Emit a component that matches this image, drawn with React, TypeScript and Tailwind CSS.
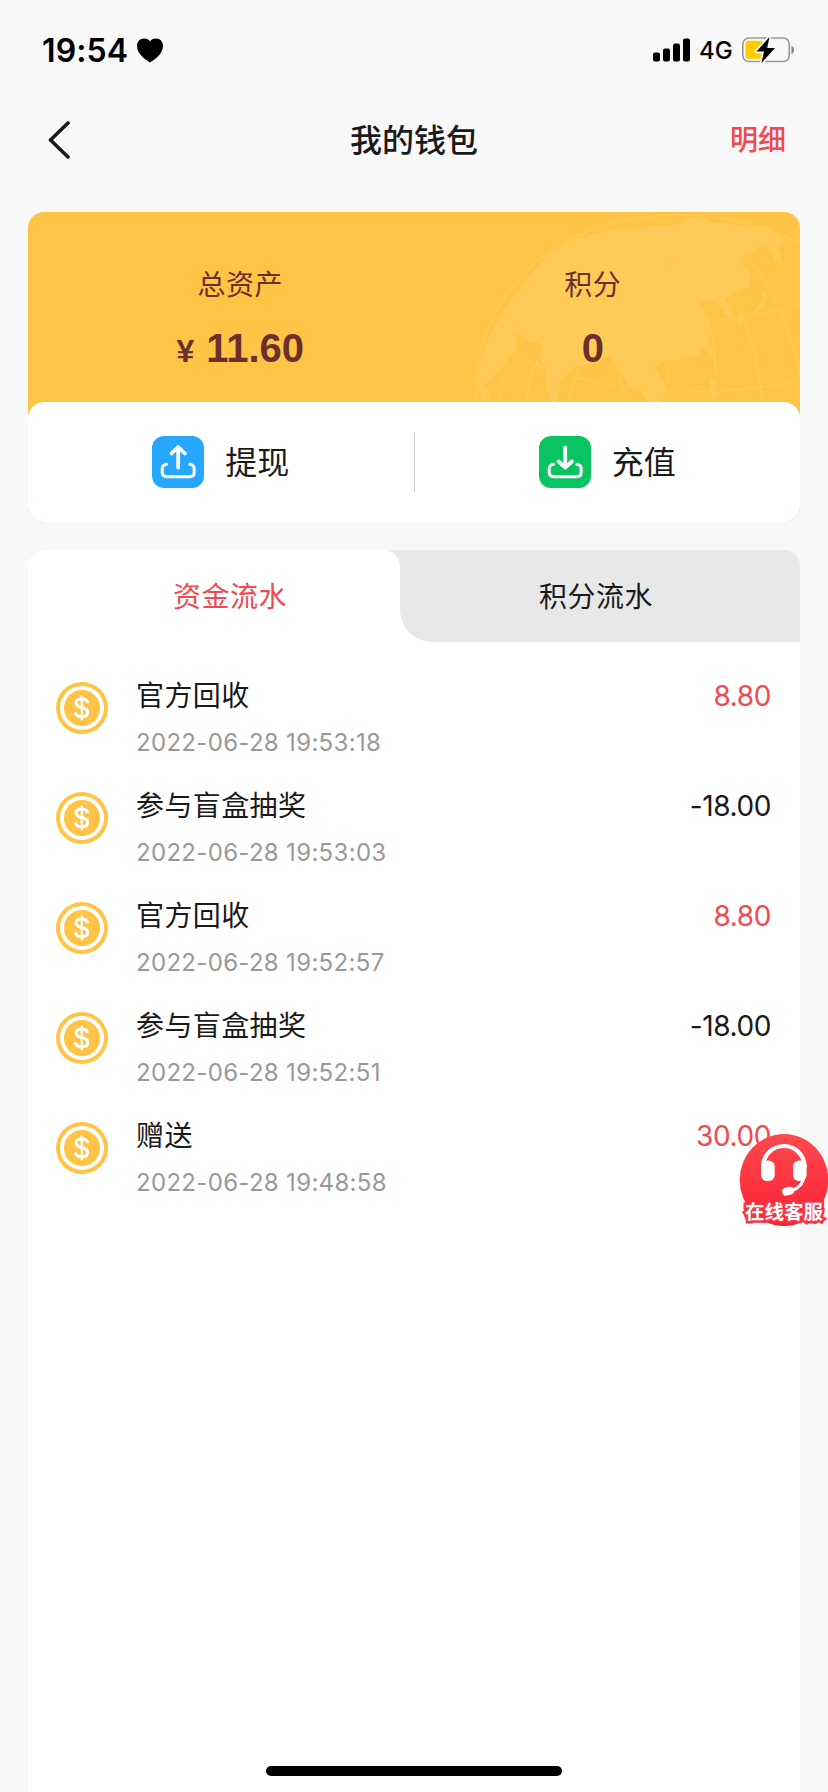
import React from "react";

type Entry = { title: string; time: string; amount: string };

const entries: Entry[] = [
  { title: "官方回收", time: "2022-06-28 19:53:18", amount: "8.80" },
  { title: "参与盲盒抽奖", time: "2022-06-28 19:53:03", amount: "-18.00" },
  { title: "官方回收", time: "2022-06-28 19:52:57", amount: "8.80" },
  { title: "参与盲盒抽奖", time: "2022-06-28 19:52:51", amount: "-18.00" },
  { title: "赠送", time: "2022-06-28 19:48:58", amount: "30.00" },
];

function StatusBar() {
  return (
    <div className="flex h-[100px] items-center justify-between pl-[42px] pr-[33px] text-black">
      <div className="flex items-center gap-[9px]">
        <span className="pt-px text-[32px] font-semibold leading-none tracking-[0.1px]">19:54</span>
        <svg width="26" height="25" viewBox="0 0 26 25">
          <path d="M13 24.500C10 22.500 0 16.500 0 8C0 3.500 3 .5 7 .5C10 .5 12 1.800 13 3.600C14 1.800 16 .5 19 .5C23 .5 26 3.500 26 8C26 16.500 16 22.500 13 24.500Z" />
        </svg>
      </div>
      <div className="flex items-center">
        <svg width="37" height="24" viewBox="0 0 37 24">
          <rect x="0" y="14.500" width="7" height="9" rx="2" />
          <rect x="10" y="10.500" width="7" height="13" rx="2" />
          <rect x="20" y="5.500" width="7" height="18" rx="2" />
          <rect x="30" y="0.500" width="7" height="23" rx="2" />
        </svg>
        <span className="ml-[9px] w-[42px] pt-[2px] text-[24px] font-medium leading-none">4G</span>
        <svg width="54" height="28" viewBox="0 0 54 28">
          <rect x="1.800" y="2" width="46.500" height="23.500" rx="6" fill="none" stroke="#999" strokeWidth="1.700" />
          <path d="M50.500 9.500C54 11.500 54 16.500 50.500 18.500Z" fill="#888" />
          <rect x="4.500" y="4.700" width="18" height="18" rx="3" fill="#fc0" />
          <path d="M28.500 1L15.500 15.500H23L20.500 27L34 12H26.200Z" stroke="#f8f8f8" strokeWidth="3.500" strokeLinejoin="round" />
          <path d="M28.500 1L15.500 15.500H23L20.500 27L34 12H26.200Z" />
        </svg>
      </div>
    </div>
  );
}

function Globe() {
  return (
    <svg className="absolute right-0 top-0" width="386" height="190" viewBox="0 36 1158 570">
      <path
        d="M184 606C184 420 250 270 400 160C520 75 660 45 800 44C960 48 1080 90 1158 130V606Z"
        fill="#ffc84c"
        fillOpacity=".2"
      />
      <g fill="#ffcb58">
        <path d="M300 330L350 310L355 285L375 240L355 240L370 215L400 210L455 150L520 110L600 88L680 82L800 72L820 52L870 50L890 65L1000 78L1050 75L1090 105L1110 125L1085 140L1100 165L1105 195L1085 185L1070 145L1040 140L1005 165L975 175L1010 220L1005 260L960 280L930 300L955 325L950 350L930 340L910 310L880 300L850 310L870 330L885 355L890 400L880 435L850 465L800 480L750 482L722 500L730 520L750 545L753 590L735 606H700L680 570L640 555L625 520L610 500L590 470L570 475L530 490L480 500L440 540L435 580L425 606H408L395 550L393 500L375 470L385 440L370 425L340 425L310 400Z" />
        <path d="M205 606L190 560L200 480L235 390L285 310L300 400L310 430L300 460L265 500L230 540L205 560L230 575L215 606Z" />
        <path d="M285 310L330 250L400 165L470 120L520 110L455 175L400 220L360 300L320 400L300 400Z" />
        <path d="M1045 265L1060 290L1050 320L1010 345L1045 300Z" />
        <path d="M970 345L990 350L980 375Z" />
        <path d="M880 430L895 450L890 475Z" />
        <path d="M890 530L905 550L900 600L885 570Z" />
      </g>
      <g fill="none" stroke="#ffcb58" strokeWidth="4">
        <path d="M184 606C184 420 250 270 400 160C520 75 660 45 800 44C960 48 1080 90 1158 130" />
        <path d="M310 465Q380 510 540 545Q700 585 900 573Q1050 565 1158 540" />
        <path d="M890 362Q1050 350 1158 312" />
        <path d="M1005 180Q1110 300 1158 520" />
        <path d="M955 285Q1030 420 1045 606" />
        <path d="M890 380Q910 500 905 606" />
        <path d="M770 482Q765 540 740 590" />
        <path d="M505 490Q480 540 465 606" />
        <path d="M375 470Q345 530 335 606" />
        <path d="M290 490Q265 540 250 606" />
        <path d="M610 500Q625 550 632 606" />
      </g>
      <g fill="none" stroke="#ffc649" strokeWidth="4">
        <path d="M765 195L790 180M975 175L1005 168L1050 140" />
      </g>
    </svg>
  );
}

function TrayIcon({ up }: { up: boolean }) {
  return (
    <svg width="52" height="52" viewBox="0 0 52 52" fill="none" stroke="#fff" strokeWidth="3" strokeLinecap="round" strokeLinejoin="round">
      <rect width="52" height="52" rx="12" fill={up ? "#26a6ff" : "#0ac461"} stroke="none" />
      <path d="M14.500 28.300C11.800 28.600 10.200 30.500 10.200 33.300V36C10.200 39 12 40.700 15 40.700H37.400C40.400 40.700 42.200 39 42.200 36V33.300C42.200 30.500 40.600 28.600 37.900 28.300" />
      {up ? (
        <path d="M26.200 31.500V11.500M19.500 17.500L26.200 11L32.900 17.500" strokeWidth="3.800" />
      ) : (
        <path d="M26.200 11.500V31M19.500 25.500L26.200 31.500L32.900 25.500" strokeWidth="3.800" />
      )}
    </svg>
  );
}

function Coin() {
  return (
    <svg className="mt-[6px] shrink-0" width="52" height="52" viewBox="0 0 52 52">
      <circle cx="26" cy="26" r="26" fill="#ffc445" />
      <circle cx="26" cy="26" r="20" fill="none" stroke="#fff" strokeWidth="4" />
      <path
        d="M31.600 21C31.200 18.200 29 17 25.800 17C22.300 17 20 18.500 20 21C20 24 22.500 24.900 25.800 25.600C29.500 26.400 31.700 27.700 31.700 30.600C31.700 33.400 29.500 34.800 25.800 34.800C22 34.800 19.700 33.300 19.400 30.400"
        fill="none"
        stroke="#fff"
        strokeWidth="3.100"
      />
      <path d="M25.800 13.500V38.200" stroke="#fff" strokeWidth="2.200" />
    </svg>
  );
}

function ServiceButton() {
  return (
    <div className="absolute left-[739px] top-[1133px] h-[94px] w-[89px]">
      <svg width="89" height="94" viewBox="0 0 89 94">
        <defs>
          <linearGradient id="service" x1="0" y1="0" x2="0" y2="1">
            <stop offset="0" stopColor="#fd4a4e" />
            <stop offset="1" stopColor="#fb1f34" />
          </linearGradient>
        </defs>
        <ellipse cx="45" cy="47" rx="44.300" ry="46" fill="url(#service)" />
        <path d="M24.100 35V33.500A20.700 20.500 0 0 1 65.500 33.500V35" fill="none" stroke="#fff" strokeWidth="4.200" />
        <path d="M22 31.500C23.500 28.500 25.500 27.500 28 27.500C33 27.500 35.700 30 35.700 34V41.500C35.700 45.500 33.500 48 29 48C24.500 48 22 45.500 22 41Z" fill="#fff" />
        <path d="M67.600 31.500C66 28.500 64 27.500 61.500 27.500C56.500 27.500 54 30 54 34V41.500C54 45.500 56 48 60.500 48C65 48 67.600 45.500 67.600 41Z" fill="#fff" />
        <path d="M65.500 42C64.500 50 59.500 55.500 52.500 57.500" fill="none" stroke="#fff" strokeWidth="3" />
        <rect x="43" y="54.200" width="12" height="8" rx="4" fill="#fff" transform="rotate(-14 49 58)" />
      </svg>
      <div className="absolute left-[6px] top-[66px] flex h-[28px] items-center whitespace-nowrap text-[19.500px] font-bold leading-none text-white [-webkit-text-stroke:5px_#fb3140] [paint-order:stroke_fill]">
        在线客服
      </div>
    </div>
  );
}

export default function App() {
  return (
    <div className="relative flex h-[1792px] w-[828px] flex-col overflow-hidden bg-[#f8f8f8] font-['Inter','Noto_Sans_CJK_SC',sans-serif] text-[#1a1a1a]">
      <StatusBar />
      <header className="grid h-[80px] grid-cols-3 items-center pl-[48px] pr-[42px]">
        <svg width="24" height="40" viewBox="0 0 24 40" fill="none" stroke="#1a1a1a" strokeWidth="3.600" strokeLinecap="round" strokeLinejoin="round">
          <path d="M20 3L2.500 20L20 37" />
        </svg>
        <h1 className="-translate-x-[3px] pt-[2px] text-center text-[32px] font-medium leading-[40px]">我的钱包</h1>
        <span className="text-right text-[28px] font-medium leading-[40px] text-[#f2484f]">明细</span>
      </header>

      <section className="mx-7 mt-8 overflow-hidden rounded-2xl bg-[#ffc445]">
        <div className="relative h-[190px]">
          <Globe />
          <div className="relative grid grid-cols-2 pl-9 pr-[31px] pt-[53px] text-center text-[#6b302a]">
            <div>
              <div className="text-[28px] leading-[40px] tracking-[0.5px]">总资产</div>
              <div className="mt-[20px] font-['Liberation_Sans',sans-serif] text-[40px] font-bold leading-[46px]">
                <span className="mr-[12px] text-[32px]">¥</span>11.60
              </div>
            </div>
            <div>
              <div className="text-[28px] leading-[40px] tracking-[0.5px]">积分</div>
              <div className="mt-[20px] font-['Liberation_Sans',sans-serif] text-[40px] font-bold leading-[46px]">0</div>
            </div>
          </div>
        </div>
        <div className="flex h-[120px] items-center rounded-2xl bg-white">
          <button className="flex flex-1 items-center justify-center gap-[21px] text-[32px]">
            <TrayIcon up />
            <span className="pt-px leading-none">提现</span>
          </button>
          <div className="h-[60px] w-px bg-[#ccc]" />
          <button className="flex flex-1 items-center justify-center gap-[21px] text-[32px]">
            <TrayIcon up={false} />
            <span className="pt-px leading-none">充值</span>
          </button>
        </div>
      </section>

      <section className="mx-7 mt-7 flex flex-1 flex-col overflow-hidden rounded-t-2xl bg-white">
        <div className="flex h-[92px] text-[28px] tracking-[0.5px]">
          <div className="w-[372px] bg-[linear-gradient(#e8e8e8_40%,#fff_40%)]">
            <div className="flex h-full items-center justify-center rounded-tr-2xl bg-white pl-8 pt-0.5 text-[#f2484f]">资金流水</div>
          </div>
          <div className="flex flex-1 items-center justify-center rounded-bl-[32px] bg-[#e8e8e8] pr-2 pt-0.5">积分流水</div>
        </div>
        <ul className="pl-7 pr-[29px] pt-[34px]">
          {entries.map((e) => (
            <li key={e.time} className="flex h-[110px] items-start">
              <Coin />
              <div className="ml-7 flex-1">
                <div className="text-[28px] leading-[40px] tracking-[0.4px]">{e.title}</div>
                <div className="mt-[9px] text-[24px] leading-[36px] tracking-[0.320px] text-[#999]">{e.time}</div>
              </div>
              <div className={e.amount.startsWith("-") ? "text-[28px] leading-[40px] tracking-[-0.4px]" : "text-[28px] leading-[40px] tracking-[-0.4px] text-[#f2484f]"}>
                {e.amount}
              </div>
            </li>
          ))}
        </ul>
      </section>

      <ServiceButton />
      <div className="absolute bottom-[16px] left-[266px] h-[10px] w-[296px] rounded-full bg-black" />
    </div>
  );
}
